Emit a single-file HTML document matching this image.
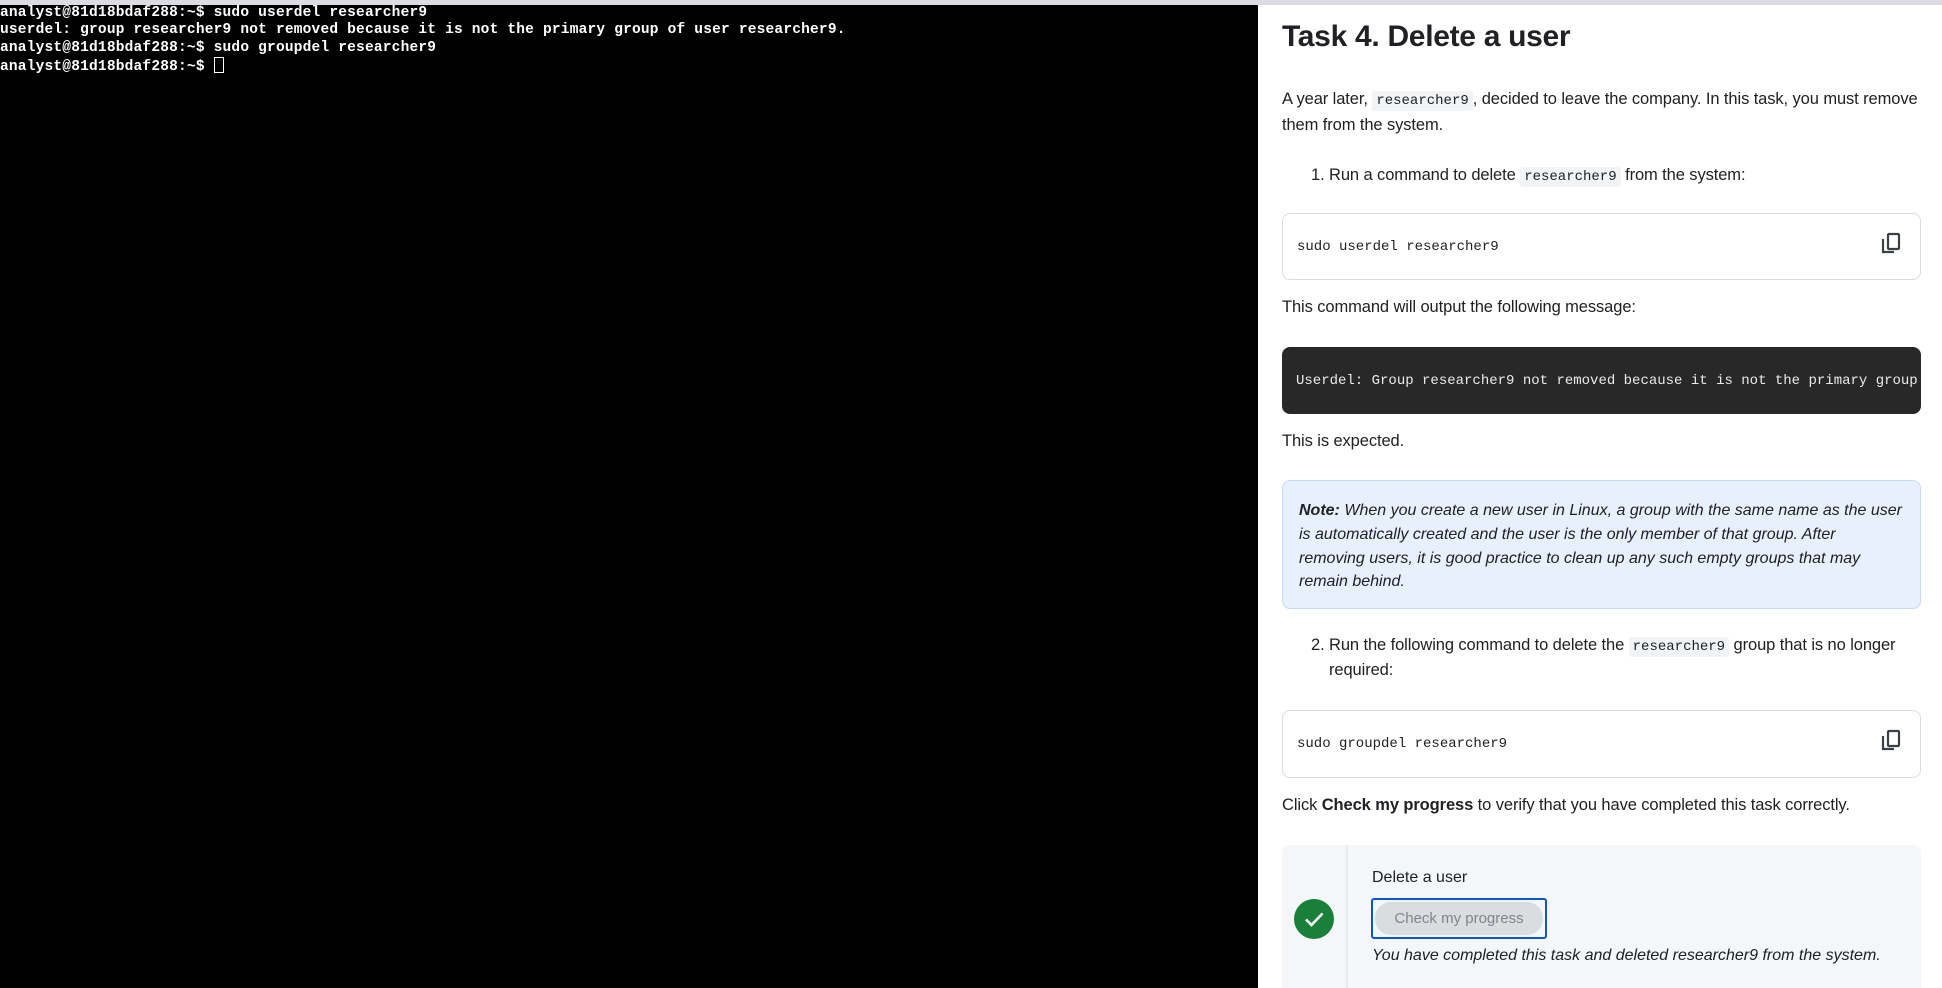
<!DOCTYPE html>
<html><head><meta charset="utf-8"><style>
*{margin:0;padding:0;box-sizing:border-box}
body{width:1942px;height:988px;overflow:hidden;background:#fff;position:relative;font-family:"Liberation Sans",sans-serif;color:#202124}
.bar{position:absolute;left:0;top:0;width:1942px;height:5px;background:#dadce0}
.term{position:absolute;left:0;top:5px;width:1258px;height:983px;background:#000;color:#fff;font-family:"Liberation Mono",monospace;font-weight:bold;font-size:14.5px;letter-spacing:0.2px;line-height:17.3px;padding-top:0;white-space:pre}
.cur{display:inline-block;width:10px;height:16px;border:1px solid #fff;vertical-align:-3px}
.a{position:absolute;left:1282px;white-space:nowrap}
h1{position:absolute;left:1282px;top:20px;font-size:30px;font-weight:bold;letter-spacing:-0.3px}
.p{font-size:16.5px;line-height:26px;letter-spacing:-0.1px}
code{font-family:"Liberation Mono",monospace;font-size:14px;background:#f1f3f4;padding:2px 4px;border-radius:3px;letter-spacing:0}
.box{position:absolute;left:1282px;width:639px;border:1px solid #dadce0;border-radius:8px;font-family:"Liberation Mono",monospace;font-size:14px;padding-left:14px;display:flex;align-items:center}
.dark{background:#282828;color:#e8eaed;border:none;overflow:hidden;white-space:nowrap}
.note{position:absolute;left:1282px;top:480px;width:639px;height:129px;background:#e8f0fe;border:1px solid #c6dafc;border-radius:8px;padding:18px 16px;font-style:italic;font-size:16px;line-height:23.8px}
.copy{position:absolute;right:18px;top:18px}
.prog{position:absolute;left:1282px;top:845px;width:639px;height:143px;background:#f5f6f8;border-radius:8px 8px 0 0}
.div{position:absolute;left:64px;top:0;width:2px;height:143px;background:#e8eaed}
.chk{position:absolute;left:12px;top:54px;width:40px;height:40px;border-radius:50%;background:#188038}
.btn{position:absolute;left:89px;top:53px;width:176px;height:41px;border:2px solid #0b57d0;border-radius:3px;padding:2px}
.btn div{background:#dadce0;border-radius:16px;height:33px;color:#80868b;font-size:15px;display:flex;align-items:center;justify-content:center}
</style></head><body>
<div class="bar"></div>
<div class="term">analyst@81d18bdaf288:~$ sudo userdel researcher9
userdel: group researcher9 not removed because it is not the primary group of user researcher9.
analyst@81d18bdaf288:~$ sudo groupdel researcher9
analyst@81d18bdaf288:~$ <span class="cur"></span></div>

<h1>Task 4. Delete a user</h1>
<div class="a p" style="top:86px">A year later, <code>researcher9</code>, decided to leave the company. In this task, you must remove</div>
<div class="a p" style="top:112px">them from the system.</div>
<div class="a p" style="top:162px;left:1311px">1. Run a command to delete <code>researcher9</code> from the system:</div>
<div class="box" style="top:213px;height:67px">sudo userdel researcher9
<svg class="copy" width="22" height="24" viewBox="0 0 22 24"><rect x="8" y="2" width="11" height="15" fill="none" stroke="#3c4043" stroke-width="2.2" rx="1"/><path d="M3 7v13h11" fill="none" stroke="#3c4043" stroke-width="2.2"/></svg></div>
<div class="a p" style="top:294px">This command will output the following message:</div>
<div class="box dark" style="top:347px;height:67px">Userdel: Group researcher9 not removed because it is not the primary group of user researcher9.</div>
<div class="a p" style="top:428px">This is expected.</div>
<div class="note"><b>Note:</b> When you create a new user in Linux, a group with the same name as the user<br>is automatically created and the user is the only member of that group. After<br>removing users, it is good practice to clean up any such empty groups that may<br>remain behind.</div>
<div class="a p" style="top:632px;left:1311px">2. Run the following command to delete the <code>researcher9</code> group that is no longer</div>
<div class="a p" style="top:657px;left:1329px">required:</div>
<div class="box" style="top:710px;height:68px">sudo groupdel researcher9
<svg class="copy" width="22" height="24" viewBox="0 0 22 24"><rect x="8" y="2" width="11" height="15" fill="none" stroke="#3c4043" stroke-width="2.2" rx="1"/><path d="M3 7v13h11" fill="none" stroke="#3c4043" stroke-width="2.2"/></svg></div>
<div class="a p" style="top:792px">Click <b>Check my progress</b> to verify that you have completed this task correctly.</div>
<div class="prog"><div class="div"></div>
<div class="chk"><svg width="40" height="40" viewBox="0 0 40 40"><path d="M12 20.5l5.5 5.5 11-11.5" fill="none" stroke="#fff" stroke-width="2.6"/></svg></div>
<div style="position:absolute;left:90px;top:24px;font-size:16px">Delete a user</div>
<div class="btn"><div>Check my progress</div></div>
<div style="position:absolute;left:90px;top:102px;font-size:16px;font-style:italic;white-space:nowrap">You have completed this task and deleted researcher9 from the system.</div>
</div>
</body></html>
